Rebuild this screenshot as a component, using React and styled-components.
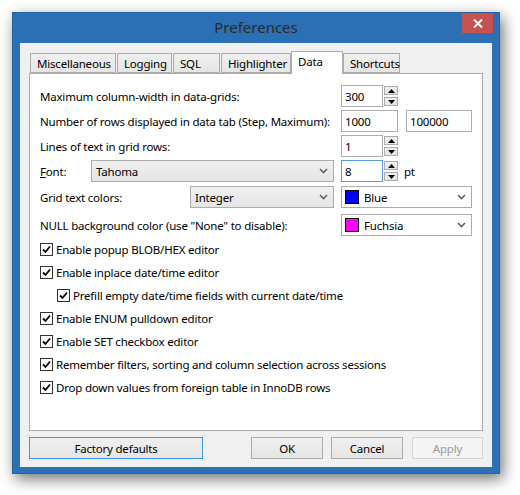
import React from "react";
import styled, { createGlobalStyle } from "styled-components";

const Global = createGlobalStyle`
  html, body { margin: 0; padding: 0; background: #ffffff; }
  body { font-family: "Noto Sans", "Open Sans", sans-serif; font-size: 11.5px; letter-spacing: -0.2px; color: #000; }
  * { box-sizing: border-box; }
`;

const Page = styled.div`
  width: 520px;
  height: 495px;
  padding: 12px 0 0 12px;
`;

const Window = styled.div`
  width: 488px;
  height: 462px;
  background: #2b70b4;
  border: 1px solid #2562a0;
  box-shadow: 3px 5px 14px rgba(0, 0, 0, 0.55);
  padding: 0 7px 6px 7px;
  display: flex;
  flex-direction: column;
`;

const TitleBar = styled.div`
  height: 30px;
  display: grid;
  grid-template-columns: 1fr auto 1fr;
  align-items: start;
`;

const Title = styled.div`
  grid-column: 2;
  align-self: center;
  font-size: 15px;
  letter-spacing: 0;
  color: #2a2a2a;
  margin-top: -3px;
`;

const CloseButton = styled.div`
  grid-column: 3;
  justify-self: end;
  width: 31px;
  height: 20px;
  margin-right: -1px;
  background: #c75050;
  display: flex;
  align-items: center;
  justify-content: center;
`;

const Client = styled.div`
  flex: 1;
  background: #f0f0f0;
  padding: 8px 9px 0 9px;
  display: flex;
  flex-direction: column;
`;

const TabRow = styled.div`
  height: 22px;
  display: flex;
  align-items: flex-end;
  padding-left: 1px;
  position: relative;
  z-index: 1;
`;

const Tab = styled.div`
  width: ${(p) => p.$w}px;
  height: ${(p) => (p.$active ? 23 : 20)}px;
  margin-bottom: ${(p) => (p.$active ? -1 : 0)}px;
  border: 1px solid #acacac;
  border-bottom: ${(p) => (p.$active ? "none" : "1px solid #acacac")};
  background: ${(p) => (p.$active ? "#ffffff" : "linear-gradient(#f0f0f0, #e5e5e5)")};
  padding: 2px 0 0 6px;
  margin-right: ${(p) => (p.$gap ? 1 : 0)}px;
  line-height: 16px;
  white-space: nowrap;
`;

const Panel = styled.div`
  height: 358px;
  border: 1px solid #acacac;
  background: #ffffff;
  padding: 11px 10px 0 10px;
  display: flex;
  flex-direction: column;
`;

const FormRow = styled.div`
  height: 22px;
  margin-top: ${(p) => p.$mt || 0}px;
  display: grid;
  grid-template-columns: 301px 1fr;
  align-items: center;
`;

const LabelCell = styled.div`
  display: flex;
  align-items: center;
  justify-content: space-between;
  padding-right: 7px;
  height: 22px;
`;

const Label = styled.span`
  white-space: nowrap;
  u { text-decoration: underline; }
`;

const ControlCell = styled.div`
  display: flex;
  align-items: center;
  height: 22px;
`;

const TextBox = styled.div`
  width: ${(p) => p.$w}px;
  height: 22px;
  border: 1px solid ${(p) => (p.$focus ? "#569de5" : "#abadb3")};
  background: #fff;
  padding: 0 0 0 3px;
  display: flex;
  align-items: center;
  margin-right: ${(p) => p.$mr || 0}px;
`;

const Spinner = styled.div`
  width: 14px;
  height: 22px;
  margin-left: 1px;
  display: flex;
  flex-direction: column;
  justify-content: space-between;
  padding: 1px 0;
`;

const SpinButton = styled.div`
  height: 9px;
  border: 1px solid #acacac;
  background: linear-gradient(#f0f0f0, #e5e5e5);
  display: flex;
  align-items: center;
  justify-content: center;
`;

const Unit = styled.span`
  margin-left: 6px;
`;

const Combo = styled.div`
  width: ${(p) => p.$w}px;
  height: 22px;
  border: 1px solid #acacac;
  background: ${(p) => (p.$white ? "#ffffff" : "linear-gradient(#f0f0f0, #e5e5e5)")};
  display: flex;
  align-items: center;
  padding: 0 5px 0 ${(p) => (p.$white ? 3 : 4)}px;
`;

const ComboText = styled.span`
  flex: 1;
`;

const Swatch = styled.span`
  width: 14px;
  height: 14px;
  border: 1px solid #000;
  background: ${(p) => p.$color};
  margin-right: 5px;
`;

const CheckList = styled.div`
  margin-top: 2px;
  display: flex;
  flex-direction: column;
`;

const CheckRow = styled.div`
  height: 23px;
  display: flex;
  align-items: center;
  padding-left: ${(p) => (p.$indent ? 17 : 0)}px;
`;

const Box = styled.span`
  width: 13px;
  height: 13px;
  border: 1px solid #333;
  background: #fff;
  margin-right: 3px;
  display: flex;
  align-items: center;
  justify-content: center;
`;

const ButtonRow = styled.div`
  display: flex;
  margin-top: 6px;
  height: 22px;
`;

const Button = styled.div`
  width: ${(p) => p.$w}px;
  height: 22px;
  border: 1px solid ${(p) => (p.$default ? "#3c9ae8" : p.$disabled ? "#d5d5d5" : "#acacac")};
  background: ${(p) => (p.$disabled ? "#f4f4f4" : "linear-gradient(#f0f0f0, #e5e5e5)")};
  color: ${(p) => (p.$disabled ? "#9a9a9a" : "#000")};
  margin-left: ${(p) => p.$ml || 0}px;
  display: flex;
  align-items: center;
  justify-content: center;
`;

const Spacer = styled.div`
  flex: 1;
`;

const Chevron = () => (
  <svg width="9" height="6" viewBox="0 0 9 6">
    <path d="M1 1 L4.5 4.5 L8 1" fill="none" stroke="#606060" strokeWidth="1.6" />
  </svg>
);

const Arrow = ({ up }) => (
  <svg width="7" height="4" viewBox="0 0 7 4">
    <path d={up ? "M0 4 L3.5 0 L7 4 Z" : "M0 0 L3.5 4 L7 0 Z"} fill="#000" />
  </svg>
);

const Tick = () => (
  <svg width="9" height="9" viewBox="0 0 9 9">
    <path d="M1 4.5 L3.5 7 L8 1.5" fill="none" stroke="#000" strokeWidth="1.8" />
  </svg>
);

const SpinBox = ({ value, focus }) => (
  <>
    <TextBox $w={42} $focus={focus}>{value}</TextBox>
    <Spinner>
      <SpinButton><Arrow up /></SpinButton>
      <SpinButton><Arrow /></SpinButton>
    </Spinner>
  </>
);

const Check = ({ label, indent }) => (
  <CheckRow $indent={indent}>
    <Box><Tick /></Box>
    <span>{label}</span>
  </CheckRow>
);

const tabs = [
  { name: "Miscellaneous", w: 86, gap: true },
  { name: "Logging", w: 55, gap: true },
  { name: "SQL", w: 47, gap: true },
  { name: "Highlighter", w: 70 },
  { name: "Data", w: 52, active: true },
  { name: "Shortcuts", w: 57 },
];

const checks = [
  { label: "Enable popup BLOB/HEX editor" },
  { label: "Enable inplace date/time editor" },
  { label: "Prefill empty date/time fields with current date/time", indent: true },
  { label: "Enable ENUM pulldown editor" },
  { label: "Enable SET checkbox editor" },
  { label: "Remember filters, sorting and column selection across sessions" },
  { label: "Drop down values from foreign table in InnoDB rows" },
];

export default function App() {
  return (
    <Page>
      <Global />
      <Window>
        <TitleBar>
          <Title>Preferences</Title>
          <CloseButton>
            <svg width="10" height="9" viewBox="0 0 10 9">
              <path d="M1 0.5 L9 8.5 M9 0.5 L1 8.5" stroke="#fff" strokeWidth="2" />
            </svg>
          </CloseButton>
        </TitleBar>
        <Client>
          <TabRow>
            {tabs.map((t) => (
              <Tab key={t.name} $w={t.w} $active={t.active} $gap={t.gap}>
                {t.name}
              </Tab>
            ))}
          </TabRow>
          <Panel>
            <FormRow>
              <LabelCell><Label>Maximum column-width in data-grids:</Label></LabelCell>
              <ControlCell><SpinBox value="300" /></ControlCell>
            </FormRow>
            <FormRow $mt={3}>
              <LabelCell><Label>Number of rows displayed in data tab (Step, Maximum):</Label></LabelCell>
              <ControlCell>
                <TextBox $w={57} $mr={8}>1000</TextBox>
                <TextBox $w={66}>100000</TextBox>
              </ControlCell>
            </FormRow>
            <FormRow $mt={3}>
              <LabelCell><Label>Lines of text in grid rows:</Label></LabelCell>
              <ControlCell><SpinBox value="1" /></ControlCell>
            </FormRow>
            <FormRow $mt={3}>
              <LabelCell>
                <Label><u>F</u>ont:</Label>
                <Combo $w={243}><ComboText>Tahoma</ComboText><Chevron /></Combo>
              </LabelCell>
              <ControlCell>
                <SpinBox value="8" focus />
                <Unit>pt</Unit>
              </ControlCell>
            </FormRow>
            <FormRow $mt={4}>
              <LabelCell>
                <Label>Grid text colors:</Label>
                <Combo $w={144}><ComboText>Integer</ComboText><Chevron /></Combo>
              </LabelCell>
              <ControlCell>
                <Combo $w={131} $white><Swatch $color="#0000ff" /><ComboText>Blue</ComboText><Chevron /></Combo>
              </ControlCell>
            </FormRow>
            <FormRow $mt={6}>
              <LabelCell><Label>NULL background color (use "None" to disable):</Label></LabelCell>
              <ControlCell>
                <Combo $w={131} $white><Swatch $color="#ff00ff" /><ComboText>Fuchsia</ComboText><Chevron /></Combo>
              </ControlCell>
            </FormRow>
            <CheckList>
              {checks.map((c) => (
                <Check key={c.label} label={c.label} indent={c.indent} />
              ))}
            </CheckList>
          </Panel>
          <ButtonRow>
            <Button $w={174} $default>Factory defaults</Button>
            <Spacer />
            <Button $w={72}>OK</Button>
            <Button $w={72} $ml={8}>Cancel</Button>
            <Button $w={71} $ml={9} $disabled>Apply</Button>
          </ButtonRow>
        </Client>
      </Window>
    </Page>
  );
}
